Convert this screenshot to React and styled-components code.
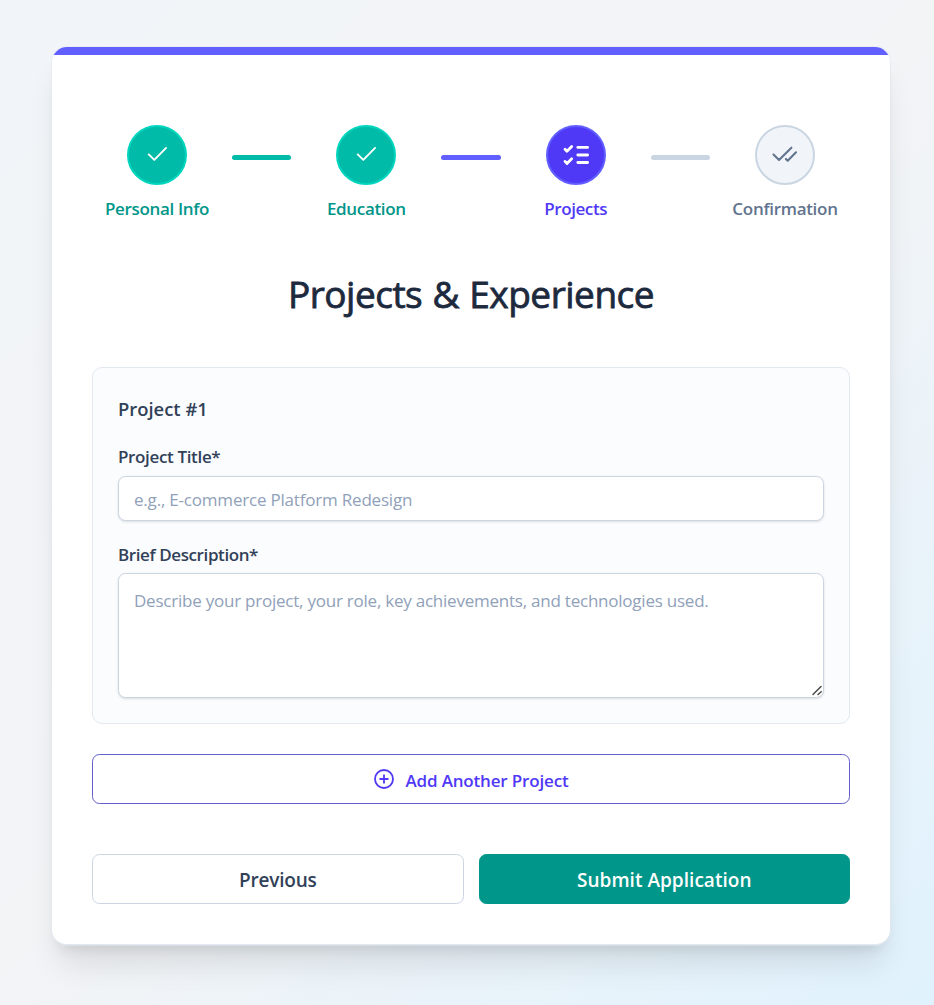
import React from 'react';
import styled, { createGlobalStyle } from 'styled-components';

const GlobalStyle = createGlobalStyle`
  *, *::before, *::after { box-sizing: border-box; }
  body { margin: 0; }
  body, button, input, textarea {
    font-family: "Segoe UI", "Open Sans", "Noto Sans", sans-serif;
  }
`;

const Page = styled.div`
  height: 1005px;
  padding: 47px 44px 61px 52px;
  background: linear-gradient(135deg, #f1f5f9 0%, #f3f4f6 50%, #e0f2fd 100%);
`;

const Card = styled.main`
  height: 898px;
  width: 838px;
  border-radius: 15px;
  border-bottom: 1px solid #e2e8f0;
  overflow: hidden;
  background: #fff;
  box-shadow: 0 0 0 1px rgba(226, 232, 240, 0.6), 0 25px 31px -6px rgba(0, 0, 0, 0.1), 0 10px 13px -7px rgba(0, 0, 0, 0.1);
`;

const Accent = styled.div`
  height: 8px;
  background: #615fff;
`;

const Content = styled.div`
  padding: 70px 40px 40px;
`;

const Steps = styled.div`
  display: flex;
  gap: 10px;
`;

const palette = {
  done: { fill: '#00bba7', border: '#00d5be', icon: '#fff', label: '#009689' },
  active: { fill: '#4f39f6', border: '#615fff', icon: '#fff', label: '#4f39f6' },
  idle: { fill: '#f1f5f9', border: '#cad5e2', icon: '#62748e', label: '#62748e' },
};

const Step = styled.div`
  width: 130px;
  display: flex;
  flex-direction: column;
  align-items: center;
`;

const Circle = styled.div`
  width: 60px;
  height: 60px;
  border-radius: 50%;
  background: ${(p) => palette[p.$state].fill};
  border: 2px solid ${(p) => palette[p.$state].border};
  color: ${(p) => palette[p.$state].icon};
`;

const StepIcon = styled.svg`
  display: block;
  width: 56px;
  height: 56px;
  fill: none;
  stroke: currentColor;
  stroke-width: ${(p) => p.$stroke};
  stroke-linecap: round;
  stroke-linejoin: round;
`;

const Text = styled.span`
  white-space: nowrap;
  font-size: ${(p) => p.$size}px;
  font-weight: 600;
  letter-spacing: ${(p) => p.$track || 0}px;
`;

const StepLabel = styled(Text)`
  margin-top: 11px;
  line-height: 25px;
  color: ${(p) => palette[p.$state].label};
`;

const Connector = styled.div`
  flex: 1;
  height: 5px;
  margin-top: 30px;
  border-radius: 3px;
  background: ${(p) => p.$color};
`;

const Title = styled.h1`
  margin: 48px 0 0;
  height: 50px;
  line-height: 50px;
  text-align: center;
  font-size: 37px;
  font-weight: 400;
  -webkit-text-stroke: 0.8px currentColor;
  letter-spacing: -0.5px;
  word-spacing: 1.2px;
  color: #1d293d;
`;

const Project = styled.section`
  margin-top: 48px;
  height: 357px;
  padding: 26px 25px 25px;
  border: 1px solid #e2e8f0;
  border-radius: 10px;
  background: #fbfcfe;
  color: #314158;
`;

const ProjectName = styled(Text)`
  display: block;
  line-height: 30px;
`;

const Field = styled.label`
  display: block;
  margin-top: ${(p) => p.$top}px;
`;

const FieldLabel = styled(Text)`
  display: block;
  line-height: 25px;
  margin-bottom: ${(p) => p.$gap}px;
`;

const control = `
  display: block;
  width: 100%;
  border: 1px solid #cad5e2;
  border-radius: 7.5px;
  background: #fff;
  box-shadow: 0 1px 3px rgba(0, 0, 0, 0.1), 0 1px 2px -1px rgba(0, 0, 0, 0.1);
  font-size: 17px;
  outline: none;
  &::placeholder { color: #90a1b9; opacity: 1; }
`;

const Input = styled.input`
  ${control}
  height: 45px;
  padding: 2px 15px 0;
  letter-spacing: -0.2px;
`;

const TextArea = styled.textarea`
  ${control}
  height: 125px;
  padding: 14px 15px;
  line-height: 25px;
  letter-spacing: -0.23px;
  resize: none;
`;

const TextAreaWrap = styled.div`
  position: relative;
`;

const Grip = styled.svg`
  position: absolute;
  right: 1px;
  bottom: 2px;
  width: 11px;
  height: 11px;
  pointer-events: none;
  stroke: #4a4a4a;
  stroke-width: 1.5;
  stroke-linecap: round;
`;

const Button = styled.button`
  display: flex;
  align-items: center;
  justify-content: center;
  gap: 12px;
  width: 100%;
  height: 50px;
  padding: 0;
  border-radius: 7.5px;
  border: 1px solid ${(p) => p.$border};
  background: ${(p) => p.$fill || '#fff'};
  color: ${(p) => p.$color};
`;

const ButtonText = styled(Text)`
  padding-top: 2px;
`;

const PlusIcon = styled.svg`
  width: 20px;
  height: 20px;
  margin-top: -1px;
  fill: none;
  stroke: currentColor;
  stroke-width: 1.8;
  stroke-linecap: round;
`;

const Actions = styled.div`
  margin-top: ${(p) => p.$top}px;
  display: flex;
  gap: 15px;
`;

const check = 'M21.7 29.4 27.3 34.9 39.1 22.9';
const checkList =
  'M19 24.2 21 26.3 25.7 21.5M19 36.4 21 38.6 25.7 33.8M31.8 22.4H41.6M31.8 30H41.6M31.8 37.5H41.6';
const doubleCheck = 'M18.5 29.4 24 34.9 36.4 22.7M30.9 33.9 32.7 35.7 41 27.3';

const steps = [
  { label: 'Personal Info', state: 'done', path: check, stroke: 1.9, line: '#00bba7', track: -0.35 },
  { label: 'Education', state: 'done', path: check, stroke: 1.9, line: '#615fff', track: -0.35 },
  { label: 'Projects', state: 'active', path: checkList, stroke: 2.8, line: '#cad5e2', track: -0.4 },
  { label: 'Confirmation', state: 'idle', path: doubleCheck, stroke: 2.1, track: -0.3 },
];

export default function App() {
  return (
    <Page>
      <GlobalStyle />
      <Card>
        <Accent />
        <Content>
          <Steps>
            {steps.map(({ label, state, path, stroke, line, track }) => (
              <React.Fragment key={label}>
                <Step>
                  <Circle $state={state}>
                    <StepIcon viewBox="2 2 56 56" $stroke={stroke}><path d={path} /></StepIcon>
                  </Circle>
                  <StepLabel $state={state} $size={17} $track={track}>{label}</StepLabel>
                </Step>
                {line && <Connector $color={line} />}
              </React.Fragment>
            ))}
          </Steps>
          <Title>Projects &amp; Experience</Title>
          <Project>
            <ProjectName $size={18.4} $track={0}>Project #1</ProjectName>
            <Field $top={20}>
              <FieldLabel $size={17} $track={-0.35} $gap={7}>Project Title*</FieldLabel>
              <Input placeholder="e.g., E-commerce Platform Redesign" />
            </Field>
            <Field $top={21}>
              <FieldLabel $size={17} $track={-0.4} $gap={6}>Brief Description*</FieldLabel>
              <TextAreaWrap>
                <TextArea placeholder="Describe your project, your role, key achievements, and technologies used." />
                <Grip viewBox="0 0 11 11"><path d="M1 9.5 9 1.5M6 9.5 9.2 6.8" /></Grip>
              </TextAreaWrap>
            </Field>
          </Project>
          <Actions $top={30}>
            <Button $border="#615fc8" $color="#4f39f6">
              <PlusIcon viewBox="0 0 20 20">
                <circle cx="10" cy="10" r="9" />
                <path d="M10 6.2v7.6M6.2 10h7.6" />
              </PlusIcon>
              <ButtonText $size={17} $track={-0.17}>Add Another Project</ButtonText>
            </Button>
          </Actions>
          <Actions $top={50}>
            <Button $border="#cad5e2" $color="#314158">
              <ButtonText $size={19} $track={-0.2}>Previous</ButtonText>
            </Button>
            <Button $border="#009689" $fill="#009689" $color="#fff">
              <ButtonText $size={19} $track={0.03}>Submit Application</ButtonText>
            </Button>
          </Actions>
        </Content>
      </Card>
    </Page>
  );
}
